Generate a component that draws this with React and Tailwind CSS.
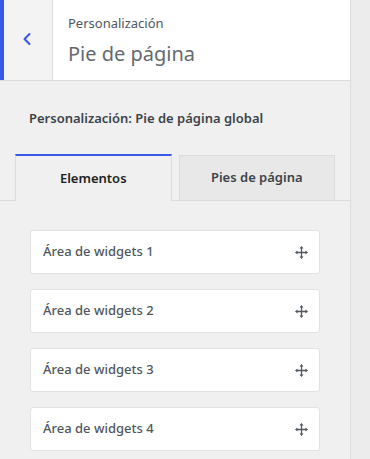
import { ChevronLeft } from "lucide-react";

const areas = ["Área de widgets 1", "Área de widgets 2", "Área de widgets 3", "Área de widgets 4"];

function MoveIcon() {
  return (
    <svg width="13" height="13" viewBox="0 0 13 13" className="text-[#50575e]">
      <path d="M6.5 1.5v10M1.5 6.5h10" stroke="currentColor" strokeWidth="1.3" />
      <path d="M6.5 0L4.5 2.5h4zM6.5 13l-2-2.5h4zM0 6.5l2.5-2v4zM13 6.5l-2.5-2v4z" fill="currentColor" />
    </svg>
  );
}

export default function App() {
  return (
    <div
      className="w-[370px] h-[459px] flex overflow-hidden bg-[#f0f0f0]"
      style={{ fontFamily: '"Noto Sans", "Open Sans", sans-serif' }}
    >
      <div className="w-[351px] shrink-0 border-r border-[#dcdcde] bg-[#f0f0f0]">
        {/* header */}
        <div className="h-[81px] flex bg-white border-b border-[#dcdcde]">
          <div className="w-[53px] shrink-0 flex items-center justify-center bg-[#f3f3f4] border-l-4 border-l-[#3858e9] border-r border-[#dcdcde]">
            <ChevronLeft className="h-5 w-5 text-[#3858e9] -ml-[3px] -mt-[2px]" strokeWidth={2.5} />
          </div>
          <div className="pl-[15px] pt-[14px]">
            <div className="text-[13px] leading-[18px] text-[#50575e]">Personalización</div>
            <div className="text-[20px] leading-[28px] mt-[8px] text-[#646970]">Pie de página</div>
          </div>
        </div>

        <div className="px-[29px] pt-[28px] text-[13px] leading-[18px] font-semibold text-[#3c434a]">
          Personalización: Pie de página global
        </div>

        {/* tabs */}
        <div className="mt-[27px] flex items-end gap-[7px] px-[15px] border-b border-[#dcdcde] h-[47px]">
          <div className="w-[157px] h-[47px] -mb-px flex items-center justify-center border-t-2 border-t-[#3858e9] border-x border-x-[#dcdcde] bg-[#f0f0f0] text-[13px] font-semibold text-[#1e1e1e]">
            Elementos
          </div>
          <div className="w-[157px] h-[46px] -mb-px flex items-center justify-center border border-[#dcdcde] bg-[#e8e8e8] text-[13px] font-semibold text-[#3c434a]">
            Pies de página
          </div>
        </div>

        {/* items */}
        <div className="px-[30px] pt-[29px] flex flex-col gap-[15px]">
          {areas.map((a) => (
            <div
              key={a}
              className="h-[44px] flex items-center justify-between pl-[12px] pr-[11px] bg-white border border-[#e2e2e2] rounded-[3px]"
            >
              <span className="text-[13px] font-medium text-[#50575e]">{a}</span>
              <MoveIcon />
            </div>
          ))}
        </div>
      </div>
      <div className="flex-1 bg-[#ececec]" />
    </div>
  );
}
